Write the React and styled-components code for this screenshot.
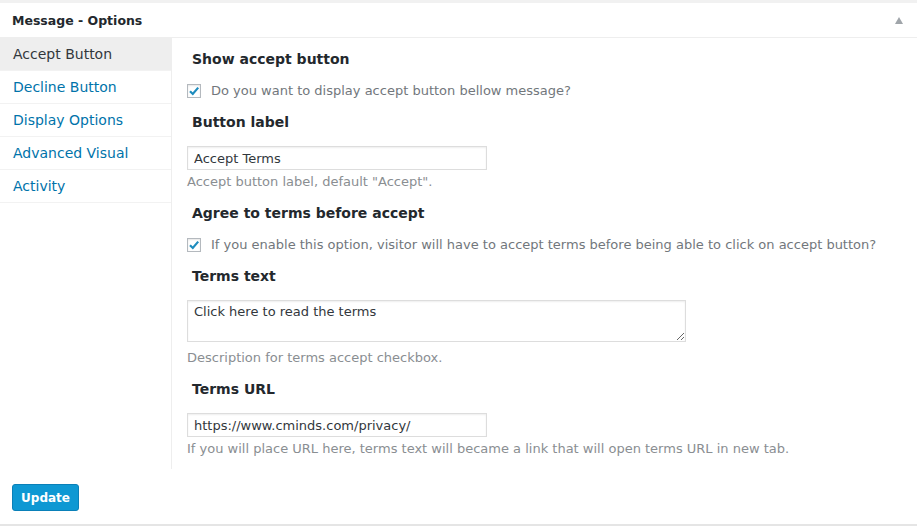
import React from "react"
import styled, { createGlobalStyle } from "styled-components"

const GlobalStyle = createGlobalStyle`
  body {
    margin: 0;
    background: #ffffff;
    font-family: "DejaVu Sans", Verdana, sans-serif;
    color: #23282d;
  }
`

const tabs = ["Accept Button", "Decline Button", "Display Options", "Advanced Visual", "Activity"]

const App = () => (
  <>
    <GlobalStyle />
    <Page>
      <Panel>
        <PanelHeader>
          <PanelTitle>Message - Options</PanelTitle>
          <Toggle />
        </PanelHeader>
        <PanelBody>
          <Sidebar>
            {tabs.map((t, i) => (
              <Tab key={t} active={i === 0}>{t}</Tab>
            ))}
          </Sidebar>
          <Content>
            <Heading>Show accept button</Heading>
            <CheckRow>
              <Check />
              <span>Do you want to display accept button bellow message?</span>
            </CheckRow>

            <Heading>Button label</Heading>
            <TextInput readOnly value="Accept Terms" />
            <Desc>Accept button label, default "Accept".</Desc>

            <Heading>Agree to terms before accept</Heading>
            <CheckRow>
              <Check />
              <span>If you enable this option, visitor will have to accept terms before being able to click on accept button?</span>
            </CheckRow>

            <Heading>Terms text</Heading>
            <TextArea readOnly value="Click here to read the terms" />
            <Desc>Description for terms accept checkbox.</Desc>

            <Heading>Terms URL</Heading>
            <TextInput readOnly value="https://www.cminds.com/privacy/" />
            <Desc>If you will place URL here, terms text will became a link that will open terms URL in new tab.</Desc>
          </Content>
        </PanelBody>
      </Panel>
      <Footer>
        <Button>Update</Button>
      </Footer>
    </Page>
  </>
)

const Check = () => (
  <CheckBox>
    <svg width="12" height="12" viewBox="0 0 12 12">
      <path d="M2 6.2 L4.8 9 L10.2 2.6" fill="none" stroke="#1e8cbe" strokeWidth="2.2" />
    </svg>
  </CheckBox>
)

const Page = styled.div`
  width: 917px;
  height: 526px;
  border-top: 3px solid #f1f1f1;
  box-sizing: border-box;
  border-bottom: 2px solid #e5e5e5;
  display: flex;
  flex-direction: column;
`
const Panel = styled.div`
  display: flex;
  flex-direction: column;
`
const PanelHeader = styled.div`
  height: 34px;
  display: flex;
  align-items: center;
  justify-content: space-between;
  padding: 0 12px;
  border-bottom: 1px solid #eeeeee;
`
const PanelTitle = styled.h2`
  margin: 0;
  font-size: 12.5px;
  font-weight: bold;
  color: #23282d;
`
const Toggle = styled.span`
  width: 0;
  height: 0;
  margin-right: 2px;
  border-left: 4px solid transparent;
  border-right: 4px solid transparent;
  border-bottom: 7px solid #a0a5aa;
`
const PanelBody = styled.div`
  display: flex;
`
const Sidebar = styled.ul`
  list-style: none;
  margin: 0;
  padding: 0;
  width: 172px;
  border-right: 1px solid #eeeeee;
  box-sizing: border-box;
  align-self: stretch;
`
const Tab = styled.li`
  height: 32px;
  display: flex;
  align-items: center;
  padding-left: 13px;
  font-size: 14px;
  border-bottom: 1px solid #f2f2f2;
  background: ${p => (p.active ? "#eeeeee" : "#ffffff")};
  color: ${p => (p.active ? "#32373c" : "#0073aa")};
`
const Content = styled.div`
  flex: 1;
  padding: 10px 0 0 15px;
  display: flex;
  flex-direction: column;
  align-items: flex-start;
`
const Heading = styled.h3`
  margin: 3px 0 16px 5px;
  font-size: 14px;
  font-weight: bold;
  color: #23282d;
`
const CheckRow = styled.label`
  display: flex;
  align-items: center;
  gap: 10px;
  font-size: 13px;
  color: #72777c;
  margin: 0 0 13px 0;
`
const CheckBox = styled.span`
  width: 14px;
  height: 14px;
  border: 1px solid #b4b9be;
  box-shadow: inset 0 1px 2px rgba(0, 0, 0, 0.1);
  background: #fff;
  display: flex;
  align-items: center;
  justify-content: center;
  box-sizing: border-box;
`
const fieldBase = `
  font-family: "DejaVu Sans", Verdana, sans-serif;
  font-size: 13px;
  color: #32373c;
  border: 1px solid #dddddd;
  box-shadow: inset 0 1px 2px rgba(0, 0, 0, 0.07);
  background: #fff;
  box-sizing: border-box;
  padding: 2px 6px;
  margin: 0;
  outline: none;
`
const TextInput = styled.input`
  ${fieldBase}
  width: 300px;
  height: 24px;
`
const TextArea = styled.textarea`
  ${fieldBase}
  width: 499px;
  height: 42px;
  padding: 3px 6px;
  margin-bottom: 4px;
  resize: vertical;
`
const Desc = styled.p`
  margin: 4px 0 13px 0;
  font-size: 13px;
  color: #8a8e92;
`
const Footer = styled.div`
  flex: 1;
  display: flex;
  align-items: center;
  padding: 2px 12px 0;
`
const Button = styled.button`
  font-family: "DejaVu Sans", Verdana, sans-serif;
  font-size: 12px;
  font-weight: bold;
  color: #fff;
  background: #0e98d3;
  border: 1px solid #0a80b8;
  border-radius: 3px;
  height: 27px;
  width: 67px;
  padding: 0;
`

export default App
